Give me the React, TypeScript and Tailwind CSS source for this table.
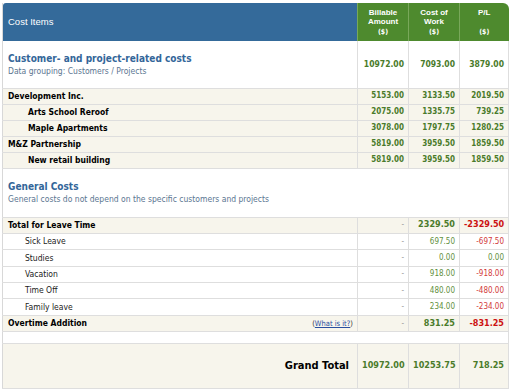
import React from "react";

type Row = {
  label: string;
  indent?: number;
  bold?: boolean;
  cream?: boolean;
  billable: string;
  cost: string;
  pl: string;
  link?: boolean;
};

const customerRows: Row[] = [
  { label: "Development Inc.", bold: true, cream: true, billable: "5153.00", cost: "3133.50", pl: "2019.50" },
  { label: "Arts School Reroof", indent: 1, bold: true, cream: true, billable: "2075.00", cost: "1335.75", pl: "739.25" },
  { label: "Maple Apartments", indent: 1, bold: true, cream: true, billable: "3078.00", cost: "1797.75", pl: "1280.25" },
  { label: "M&Z Partnership", bold: true, cream: true, billable: "5819.00", cost: "3959.50", pl: "1859.50" },
  { label: "New retail building", indent: 1, bold: true, cream: true, billable: "5819.00", cost: "3959.50", pl: "1859.50" },
];

const generalRows: Row[] = [
  { label: "Total for Leave Time", bold: true, cream: true, billable: "-", cost: "2329.50", pl: "-2329.50" },
  { label: "Sick Leave", indent: 2, billable: "-", cost: "697.50", pl: "-697.50" },
  { label: "Studies", indent: 2, billable: "-", cost: "0.00", pl: "0.00" },
  { label: "Vacation", indent: 2, billable: "-", cost: "918.00", pl: "-918.00" },
  { label: "Time Off", indent: 2, billable: "-", cost: "480.00", pl: "-480.00" },
  { label: "Family leave", indent: 2, billable: "-", cost: "234.00", pl: "-234.00" },
  { label: "Overtime Addition", bold: true, cream: true, billable: "-", cost: "831.25", pl: "-831.25", link: true },
];

const cell = "border-b border-r border-[#dedede] px-[4px] text-right align-middle whitespace-nowrap";

function DataRow({ row, general }: { row: Row; general?: boolean }) {
  const bg = row.cream ? "bg-[#f7f5ec]" : "bg-white";
  const big = general && row.bold;
  const h = general ? "h-[16.4px]" : "h-[16px]";
  const numCls = general
    ? big
      ? "text-[9px] font-bold"
      : "text-[8px]"
    : "text-[8px] font-bold";
  const green = general && !row.bold ? "text-[#5f9040]" : "text-[#4a7b2a]";
  const red = general && !row.bold ? "text-[#d23a3a]" : "text-[#cc1111]";
  const plColor = row.pl.startsWith("-") ? red : green;
  return (
    <tr className={bg}>
      <td className={`border-b border-r border-[#dedede] ${h} pl-[5px] pr-[4px] text-[8.5px] ${row.bold ? "font-bold text-black" : "text-[#222]"}`}>
        <div className="flex items-center justify-between">
          <span className={row.indent === 1 ? "pl-[20px]" : row.indent === 2 ? "pl-[17px]" : ""}>{row.label}</span>
          {row.link && (
            <span className="text-[7.5px] font-normal text-[#333]">
              (<span className="text-[#2a4fa0] underline">What is it?</span>)
            </span>
          )}
        </div>
      </td>
      <td className={`${cell} ${h} ${row.billable === "-" ? "text-[8px] text-[#999]" : `${numCls} ${green}`}`}>{row.billable}</td>
      <td className={`${cell} ${h} ${numCls} ${green}`}>{row.cost}</td>
      <td className={`${cell} ${h} ${numCls} ${plColor}`}>{row.pl}</td>
    </tr>
  );
}

export default function App() {
  return (
    <div
      className="w-[510px] h-[391px] bg-white pt-[3px] pl-[2px]"
      style={{ fontFamily: "'DejaVu Sans Condensed', 'DejaVu Sans', Verdana, sans-serif", fontStretch: "condensed" }}
    >
      <table className="w-[506px] border-collapse table-fixed border-l border-[#d8d8d8]">
        <colgroup>
          <col className="w-[355px]" />
          <col className="w-[51px]" />
          <col className="w-[51px]" />
          <col className="w-[49px]" />
        </colgroup>
        <thead>
          <tr className="h-[38px]" style={{ fontFamily: "'Liberation Sans', Arial, sans-serif" }}>
            <th className="bg-[#346a9a] rounded-tl-[3px] text-left pl-[5px] text-[9.5px] font-normal text-white align-middle">Cost Items</th>
            {["Billable|Amount", "Cost of|Work", "P/L|"].map((h, i) => (
              <th
                key={i}
                className={`bg-[#4e8a2e] border-l border-[#79a85a] text-white text-[8px] font-bold leading-[9px] align-top pt-[5px] ${i === 2 ? "rounded-tr-[6px]" : ""}`}
              >
                <div className="h-[20px]">
                  {h.split("|")[0]}
                  <br />
                  {h.split("|")[1]}
                </div>
                <div className="text-[7px]" style={{ fontFamily: "'DejaVu Sans Condensed', 'DejaVu Sans', sans-serif" }}>($)</div>
              </th>
            ))}
          </tr>
        </thead>
        <tbody>
          <tr className="bg-white">
            <td className="border-b border-r border-[#dedede] h-[47px] pl-[5px] align-middle">
              <div className="text-[10px] font-bold text-[#336699] leading-[14px]">Customer- and project-related costs</div>
              <div className="text-[8.5px] text-[#5b7691] leading-[11px]">Data grouping: Customers / Projects</div>
            </td>
            <td className={`${cell} text-[8.5px] font-bold text-[#4a7b2a]`}>10972.00</td>
            <td className={`${cell} text-[8.5px] font-bold text-[#4a7b2a]`}>7093.00</td>
            <td className={`${cell} text-[8.5px] font-bold text-[#4a7b2a]`}>3879.00</td>
          </tr>
          {customerRows.map((r, i) => (
            <DataRow key={i} row={r} />
          ))}
          <tr className="bg-white">
            <td colSpan={4} className="border-b border-r border-[#dedede] h-[49px] pl-[5px] align-middle">
              <div className="text-[10px] font-bold text-[#336699] leading-[14px]">General Costs</div>
              <div className="text-[8.5px] text-[#5b7691] leading-[11px]">General costs do not depend on the specific customers and projects</div>
            </td>
          </tr>
          {generalRows.map((r, i) => (
            <DataRow key={i} row={r} general />
          ))}
          <tr className="bg-white">
            <td colSpan={4} className="border-b border-r border-[#dedede] h-[12px]"></td>
          </tr>
          <tr className="bg-[#f7f5ec]">
            <td className="border-b border-r border-[#dedede] h-[45px] pr-[8px] text-right text-[11px] font-bold text-black">Grand Total</td>
            <td className={`${cell} text-[9px] font-bold text-[#4a7b2a]`}>10972.00</td>
            <td className={`${cell} text-[9px] font-bold text-[#4a7b2a]`}>10253.75</td>
            <td className={`${cell} text-[9px] font-bold text-[#4a7b2a]`}>718.25</td>
          </tr>
        </tbody>
      </table>
    </div>
  );
}
